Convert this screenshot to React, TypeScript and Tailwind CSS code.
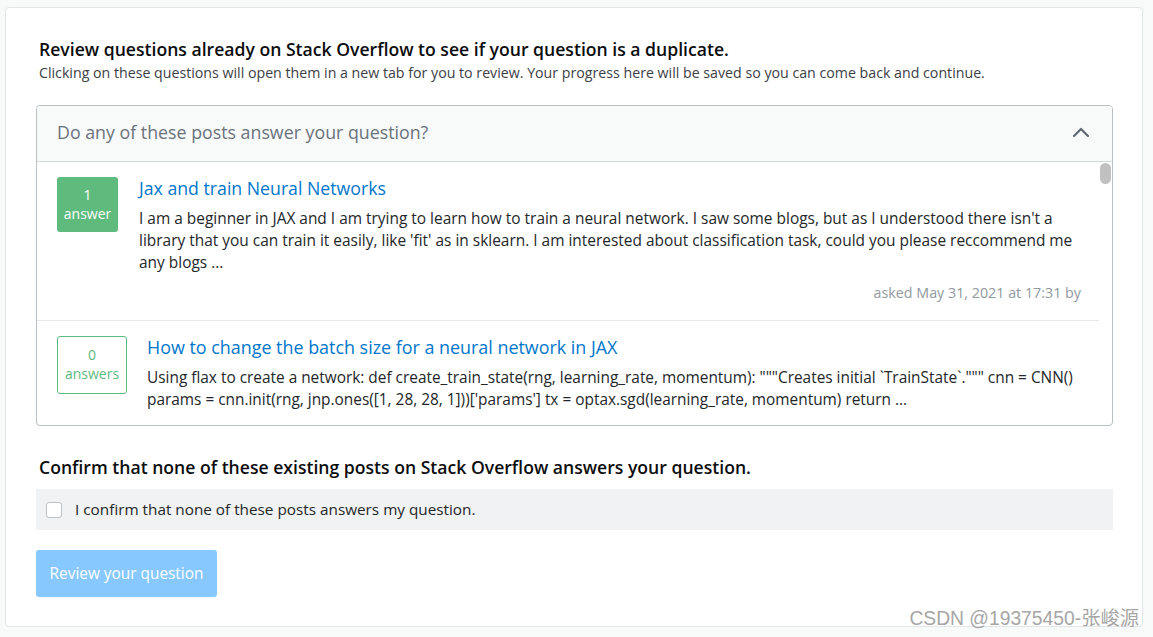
import React from "react";

const font = "font-['Open_Sans','Liberation_Sans',sans-serif]";

function Badge({ count, label, filled }: { count: number; label: string; filled: boolean }) {
  return (
    <div
      className={
        filled
          ? "flex h-[55px] w-[61px] shrink-0 flex-col items-center justify-center rounded-[3px] bg-[#5eba7d] pb-[2px] text-[14px] leading-[19px] text-white"
          : "flex h-[58px] w-[70px] shrink-0 flex-col items-center justify-center rounded-[3px] border border-[#5eba7d] pb-[2px] text-[14px] leading-[19px] text-[#5eba7d]"
      }
    >
      <span>{count}</span>
      <span>{label}</span>
    </div>
  );
}

export default function App() {
  return (
    <div className={`relative h-[637px] w-[1153px] overflow-hidden bg-[#f8f9f9] pl-[5px] pr-[10px] pt-[7px] ${font}`}>
      <div className="flex h-[620px] flex-col rounded-[4px] border border-[#e3e6e8] bg-white pl-[30px] pr-[29px] pt-[29px]">
        <h2 className="pl-[3px] text-[17.6px] font-semibold leading-[24px] text-[#0c0d0e]">
          Review questions already on Stack Overflow to see if your question is a duplicate.
        </h2>
        <p className="mt-[3px] pl-[3px] text-[14.2px] leading-[18px] text-[#3b4045]">
          Clicking on these questions will open them in a new tab for you to review. Your progress here will be saved so you can come back and continue.
        </p>

        <div className="mt-[23px] flex h-[321px] flex-col overflow-hidden rounded-[4px] border border-[#babfc4]">
          <div className="flex h-[56px] shrink-0 items-center justify-between border-b border-[#d6d9dc] bg-[#f8f9f9] pl-[20px] pr-[22px]">
            <span className="mb-[3px] text-[17.8px] leading-[24px] text-[#6a737c]">Do any of these posts answer your question?</span>
            <svg width="18" height="12" viewBox="0 0 18 12" fill="none" className="mb-[3px]">
              <polyline points="2,10 9,3 16,10" stroke="#5f6871" strokeWidth="2.2" strokeLinecap="round" strokeLinejoin="round" />
            </svg>
          </div>

          <div className="relative flex-1 overflow-hidden pr-[13px]">
            <div className="absolute right-[1px] top-[1px] h-[21px] w-[11px] rounded-full bg-[#c1c1c1]" />

            <div className="flex gap-[21px] border-b border-[#e4e6e8] pl-[20px] pr-[18px] pt-[15px] pb-[17px]">
              <Badge count={1} label="answer" filled />
              <div className="flex flex-1 flex-col">
                <a className="text-[17.7px] leading-[22px] text-[#0077cc]">Jax and train Neural Networks</a>
                <p className="mt-[8px] text-[15.45px] leading-[22px] text-[#242729]">
                  I am a beginner in JAX and I am trying to learn how to train a neural network. I saw some blogs, but as I understood there isn't a
                  <br />
                  library that you can train it easily, like 'fit' as in sklearn. I am interested about classification task, could you please reccommend me
                  <br />
                  any blogs ...
                </p>
                <div className="mt-[10px] text-right text-[14.3px] leading-[20px] text-[#9199a1]">asked May 31, 2021 at 17:31 by</div>
              </div>
            </div>

            <div className="flex gap-[20px] pl-[20px] pr-[18px] pt-[15px]">
              <Badge count={0} label="answers" filled={false} />
              <div className="flex flex-1 flex-col">
                <a className="text-[17.9px] leading-[22px] text-[#0077cc]">How to change the batch size for a neural network in JAX</a>
                <p className="mt-[9px] text-[15.4px] leading-[22px] text-[#242729]">
                  Using flax to create a network: def create_train_state(rng, learning_rate, momentum): """Creates initial `TrainState`.""" cnn = CNN()
                  <br />
                  params = cnn.init(rng, jnp.ones([1, 28, 28, 1]))['params'] tx = optax.sgd(learning_rate, momentum) return ...
                </p>
              </div>
            </div>
          </div>
        </div>

        <h3 className="mt-[29px] pl-[3px] text-[17.6px] font-semibold leading-[24px] text-[#0c0d0e]">
          Confirm that none of these existing posts on Stack Overflow answers your question.
        </h3>
        <label className="mt-[10px] flex h-[41px] items-center gap-[13px] bg-[#f1f2f3] pl-[10px]">
          <span className="h-[16px] w-[16px] rounded-[3px] border border-[#bbc0c4] bg-white" />
          <span className="text-[15.3px] text-[#242729]">I confirm that none of these posts answers my question.</span>
        </label>
        <div className="mt-[20px]">
          <button className="h-[47px] w-[181px] rounded-[3px] bg-[#86c8ff] text-[15.4px] text-white">Review your question</button>
        </div>
      </div>

      <div className="absolute bottom-[7px] right-[14px] font-['Liberation_Sans','Noto_Sans_CJK_SC',sans-serif] text-[19.3px] leading-[22px] text-[#a6a6a6]">
        CSDN @19375450-张峻源
      </div>
    </div>
  );
}
